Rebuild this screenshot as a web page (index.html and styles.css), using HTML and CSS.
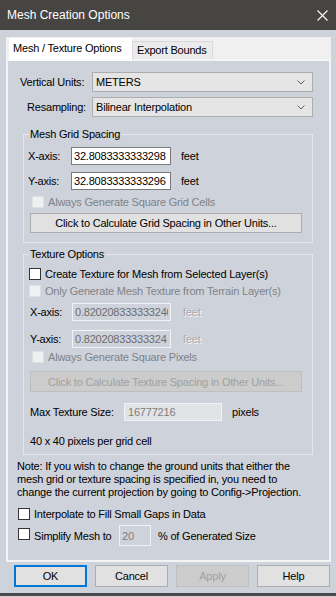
FILE: index.html
```html
<!DOCTYPE html>
<html lang="en">
<head>
  <meta charset="UTF-8">
  <meta name="viewport" content="width=device-width, initial-scale=1.0">
  <title>Mesh Creation Options</title>
  <link rel="stylesheet" href="styles.css">
</head>
<body>

<div class="titlebar">
  <span class="title">Mesh Creation Options</span>
  <svg class="close" width="11" height="11" viewBox="0 0 11 11">
    <path d="M0.5 0.5 L10.5 10.5 M10.5 0.5 L0.5 10.5" stroke="#fff" stroke-width="1.1" fill="none"/>
  </svg>
</div>

<div class="tabs">
  <div class="tab-strip">
    <div class="tab tab-active">Mesh / Texture Options</div>
    <div class="tab">Export Bounds</div>
  </div>

  <div class="page">
    <div class="row">
      <span class="row-label label-units">Vertical Units:</span>
      <div class="select">
        <span>METERS</span>
        <svg width="8" height="5" viewBox="0 0 8 5"><polyline points="0.5,0.5 4,4 7.5,0.5" stroke="#606060" fill="none"/></svg>
      </div>
    </div>
    <div class="row row-gap">
      <span class="row-label label-resample">Resampling:</span>
      <div class="select">
        <span>Bilinear Interpolation</span>
        <svg width="8" height="5" viewBox="0 0 8 5"><polyline points="0.5,0.5 4,4 7.5,0.5" stroke="#606060" fill="none"/></svg>
      </div>
    </div>

    <fieldset class="group group-mesh">
      <legend>Mesh Grid Spacing</legend>
      <div class="axis-row axis-first">
        <span class="axis-label">X-axis:</span>
        <input class="num" type="text" value="32.8083333333298">
        <span class="unit">feet</span>
      </div>
      <div class="axis-row axis-second">
        <span class="axis-label">Y-axis:</span>
        <input class="num" type="text" value="32.8083333333296">
        <span class="unit">feet</span>
      </div>
      <label class="check check-off check-square">
        <input type="checkbox" disabled>
        <span>Always Generate Square Grid Cells</span>
      </label>
      <button class="wide-btn" type="button">Click to Calculate Grid Spacing in Other Units...</button>
    </fieldset>

    <fieldset class="group group-texture">
      <legend>Texture Options</legend>
      <label class="check check-create">
        <input type="checkbox">
        <span>Create Texture for Mesh from Selected Layer(s)</span>
      </label>
      <label class="check check-off check-terrain">
        <input type="checkbox" disabled>
        <span>Only Generate Mesh Texture from Terrain Layer(s)</span>
      </label>
      <div class="axis-row axis-first tex">
        <span class="axis-label">X-axis:</span>
        <input class="num" type="text" value="0.820208333333240" disabled>
        <span class="unit unit-off">feet</span>
      </div>
      <div class="axis-row axis-tex-second tex">
        <span class="axis-label">Y-axis:</span>
        <input class="num" type="text" value="0.82020833333324" disabled>
        <span class="unit unit-off">feet</span>
      </div>
      <label class="check check-off check-pixels">
        <input type="checkbox" disabled>
        <span>Always Generate Square Pixels</span>
      </label>
      <button class="wide-btn wide-btn-tex" type="button" disabled>Click to Calculate Texture Spacing in Other Units...</button>
      <div class="max-row">
        <span class="max-label">Max Texture Size:</span>
        <input class="max-input" type="text" value="16777216" disabled>
        <span class="unit">pixels</span>
      </div>
      <div class="cell-note">40 x 40 pixels per grid cell</div>
    </fieldset>

    <p class="note">Note: If you wish to change the ground units that either the<br>mesh grid or texture spacing is specified in, you need to<br>change the current projection by going to Config-&gt;Projection.</p>

    <label class="check check-interp">
      <input type="checkbox">
      <span>Interpolate to Fill Small Gaps in Data</span>
    </label>
    <div class="simplify-row">
      <input class="simplify-check" type="checkbox">
      <span class="simplify-label">Simplify Mesh to</span>
      <input class="simplify-input" type="text" value="20" disabled>
      <span class="simplify-unit">% of Generated Size</span>
    </div>
  </div>
</div>

<div class="buttons">
  <button class="btn btn-default" type="button">OK</button>
  <button class="btn" type="button">Cancel</button>
  <button class="btn" type="button" disabled>Apply</button>
  <button class="btn" type="button">Help</button>
</div>
<div class="frame-bottom"></div>

</body>
</html>
```

FILE: styles.css
```css
body {
  margin: 0;
  width: 336px;
  height: 597px;
  overflow: hidden;
  background-color: #ced2db;
  font-family: "Liberation Sans", Arial, sans-serif;
  font-size: 11px;
  letter-spacing: -0.2px;
  color: #000;
}

/* window title */
.titlebar {
  height: 30px;
  background-color: #474541;
  color: #fff;
  display: flex;
  align-items: center;
  justify-content: space-between;
  padding: 0 8px 0 7px;
  font-size: 12px;
  letter-spacing: 0;
}

.close {
  display: block;
}

/* tab control */
.tabs {
  margin: 7px 5px 0 6px;
}

.tab-strip {
  height: 22px;
  background-color: #f0f0f0;
  display: flex;
  align-items: flex-start;
  padding-left: 3px;
}

.tab {
  margin-top: 4px;
  height: 17px;
  line-height: 17px;
  padding: 0 5px 0 4px;
  background-color: #ebebeb;
  border: 1px solid #d9d9d9;
  border-bottom: none;
}

.tab-active {
  position: relative;
  z-index: 1;
  margin-top: 1px;
  height: 23px;
  line-height: 20px;
  width: 123px;
  box-sizing: border-box;
  background-color: #fff;
  border: none;
}

.page {
  border: 2px solid #f4f4f4;
  padding: 11px 0 14px 0;
  background-color: #ced2db;
}

/* top selects */
.row {
  display: flex;
  align-items: center;
  height: 20px;
}

.row-gap {
  margin-top: 5px;
}

.row-label {
  width: 84px;
  box-sizing: border-box;
}

.label-units {
  padding-left: 12px;
}

.label-resample {
  padding-left: 19px;
}

.select {
  width: 221px;
  height: 20px;
  box-sizing: border-box;
  border: 1px solid #adadad;
  background-color: #e5e5e5;
  display: flex;
  align-items: center;
  justify-content: space-between;
  padding: 0 7px 0 3px;
}

/* group boxes */
.group {
  margin: 10px 0 0 15px;
  width: 290px;
  box-sizing: border-box;
  padding: 0 0 9px 0;
  border: 1px solid #e4e6eb;
  min-width: 0;
}

.group-texture {
  margin-top: 4px;
  padding-bottom: 6px;
}

.group legend {
  margin-left: 5px;
  padding: 0 1px;
  line-height: 14px;
}

.axis-row {
  display: flex;
  align-items: center;
  height: 18px;
}

.axis-first {
  margin-top: 6px;
}

.axis-second {
  margin-top: 7px;
}

.axis-tex-second {
  margin-top: 9px;
}

.axis-label {
  width: 47px;
  padding-left: 4px;
  box-sizing: border-box;
}

.num {
  width: 100px;
  height: 18px;
  box-sizing: border-box;
  margin: 0;
  padding: 0 2px;
  border: 1px solid #7a7a7a;
  background-color: #fff;
  font-family: inherit;
  font-size: 11px;
  letter-spacing: -0.2px;
  color: #000;
}

.unit {
  margin-left: 10px;
}

.tex .axis-label {
  width: 48px;
  padding-left: 6px;
}

.tex .num {
  width: 99px;
  border-color: #f2f3f5;
  background-color: transparent;
  color: #6d6d6d;
}

.tex .unit {
  margin-left: 12px;
}

.unit-off {
  color: #a9abaf;
  text-shadow: 1px 1px 0 #f4f5f7;
}

/* checkboxes */
.check {
  display: flex;
  align-items: center;
  gap: 4px;
  height: 12px;
}

.check input,
.simplify-check {
  appearance: none;
  width: 12px;
  height: 12px;
  margin: 0;
  border: 1px solid #333;
  background-color: #fff;
}

.check-off {
  color: #808287;
}

.check-off input {
  border-color: #dedfe2;
  background-color: #eff0f2;
}

.check-square {
  margin: 6px 0 0 8px;
}

.check-create {
  margin: 7px 0 0 5px;
}

.check-terrain {
  margin: 5px 0 0 5px;
}

.check-pixels {
  margin: 3px 0 0 8px;
}

.check-interp {
  margin: 9px 0 0 10px;
}

.wide-btn {
  display: block;
  margin: 5px 0 0 6px;
  width: 272px;
  height: 20px;
  padding: 0;
  border: 1px solid #adadad;
  background-color: #e1e1e1;
  font-family: inherit;
  font-size: 11px;
  letter-spacing: -0.2px;
  color: #000;
}

.wide-btn-tex {
  margin-top: 8px;
  height: 21px;
  border-color: #bfbfbf;
  background-color: #cccccc;
  color: #a0a0a0;
}

.max-row {
  display: flex;
  align-items: center;
  height: 18px;
  margin-top: 11px;
}

.max-label {
  width: 100px;
  padding-left: 6px;
  box-sizing: border-box;
}

.max-input {
  width: 98px;
  height: 18px;
  box-sizing: border-box;
  margin: 0;
  padding: 0 3px;
  border: 1px solid #f2f3f5;
  background-color: #e2e3e7;
  font-family: inherit;
  font-size: 11px;
  letter-spacing: -0.2px;
  color: #7d7d7d;
}

.cell-note {
  margin-top: 13px;
  padding-left: 6px;
  line-height: 14px;
}

.note {
  margin: 5px 0 0 9px;
  line-height: 13px;
  white-space: nowrap;
}

/* simplify row */
.simplify-row {
  display: flex;
  align-items: center;
  height: 21px;
  margin: 5px 0 0 10px;
}

.simplify-check {
  margin-bottom: 4px;
}

.simplify-label {
  width: 89px;
  padding-left: 4px;
  box-sizing: border-box;
}

.simplify-input {
  width: 32px;
  height: 21px;
  box-sizing: border-box;
  margin: 0;
  padding: 0 2px;
  border: 1px solid #f2f3f5;
  background-color: transparent;
  font-family: inherit;
  font-size: 11px;
  color: #7d7d7d;
}

.simplify-unit {
  margin-left: 7px;
}

/* dialog buttons */
.buttons {
  display: flex;
  gap: 8px;
  padding-left: 14px;
  margin-top: 3px;
}

.btn {
  width: 73px;
  height: 22px;
  padding: 0;
  border: 1px solid #adadad;
  background-color: #e1e1e1;
  font-family: inherit;
  font-size: 11px;
  letter-spacing: -0.2px;
  color: #000;
}

.btn-default {
  border: 2px solid #0078d7;
}

.btn:disabled {
  border-color: #bfbfbf;
  background-color: #cccccc;
  color: #a0a0a0;
}

.frame-bottom {
  margin-top: 6px;
  height: 3px;
  background-color: #4a4a4a;
}
```
